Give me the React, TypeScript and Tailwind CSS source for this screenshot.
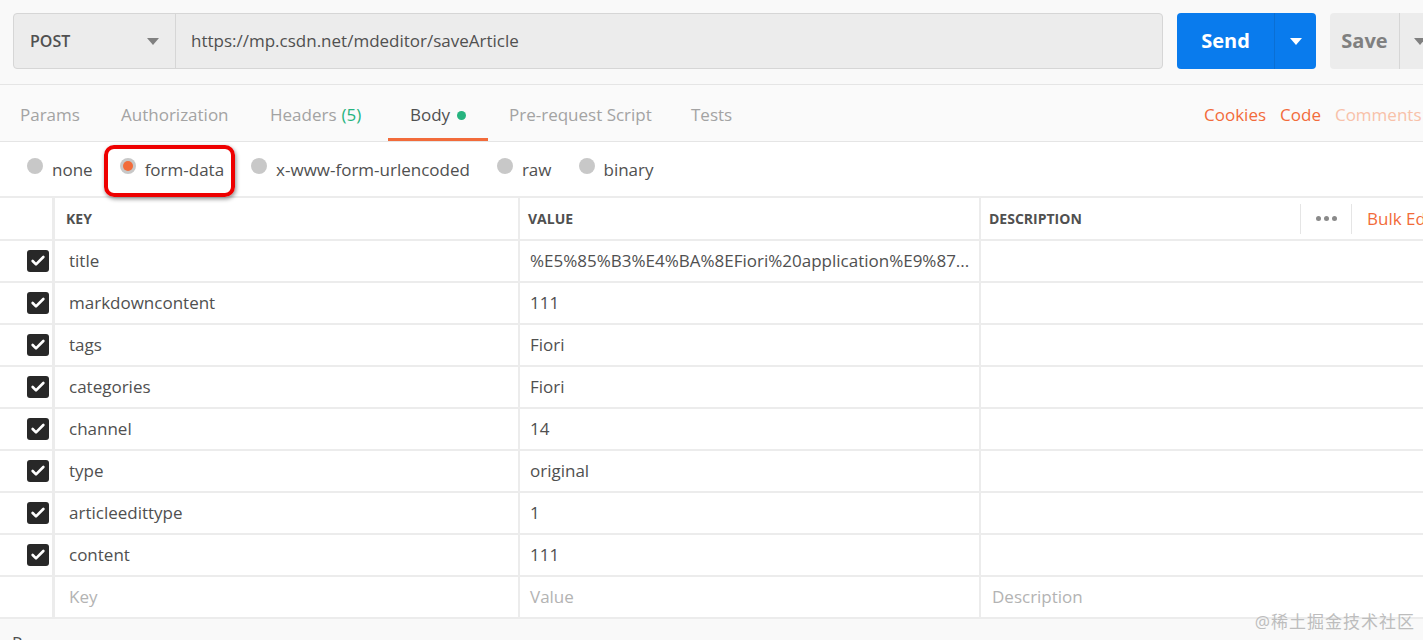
import { Check } from "lucide-react";

const rows = [
  { key: "title", value: "%E5%85%B3%E4%BA%8EFiori%20application%E9%87..." },
  { key: "markdowncontent", value: "111" },
  { key: "tags", value: "Fiori" },
  { key: "categories", value: "Fiori" },
  { key: "channel", value: "14" },
  { key: "type", value: "original" },
  { key: "articleedittype", value: "1" },
  { key: "content", value: "111" },
];

const tabs = [
  { label: "Params", cls: "w-[100px] pl-[20px]" },
  { label: "Authorization", cls: "w-[149px] pl-[21px]" },
  { label: "Headers", count: "(5)", cls: "w-[139px] pl-[21px]" },
  { label: "Body", active: true, cls: "w-[100px] pl-[22px]" },
  { label: "Pre-request Script", cls: "w-[182px] pl-[21px]" },
  { label: "Tests", cls: "w-[80px] pl-[21px]" },
];

const bodyTypes = ["none", "form-data", "x-www-form-urlencoded", "raw", "binary"];

function Caret({ className }: { className?: string }) {
  return (
    <svg width="12" height="7" viewBox="0 0 12 7" className={className}>
      <path d="M0 0 L12 0 L6 7 Z" fill="currentColor" />
    </svg>
  );
}

export default function App() {
  return (
    <div
      className="relative h-[640px] w-[1423px] overflow-hidden bg-[#f9f9f9] text-[#505050]"
      style={{ fontFamily: "'Open Sans', 'Noto Sans CJK SC', sans-serif" }}
    >
      {/* request bar */}
      <div className="flex h-[84px] items-start gap-[14px] overflow-hidden pl-[13px] pt-[13px]">
        <div className="flex h-[56px] w-[1150px] shrink-0 rounded-[4px] border border-[#d6d6d6] bg-[#ececec]">
          <div className="flex w-[162px] items-center justify-between border-r border-[#d6d6d6] pl-[16px] pr-[16px]">
            <span className="text-[16px] font-semibold">POST</span>
            <Caret className="text-[#808080]" />
          </div>
          <div className="flex items-center pl-[15px] text-[17px]">https://mp.csdn.net/mdeditor/saveArticle</div>
        </div>
        <div className="flex h-[56px] w-[139px] shrink-0 overflow-hidden rounded-[4px] bg-[#097bed] text-white">
          <div className="flex w-[97px] items-center justify-center text-[20px] font-bold">Send</div>
          <div className="flex flex-1 items-center justify-center border-l border-[#0a6fd4]">
            <Caret />
          </div>
        </div>
        <div className="flex h-[56px] w-[120px] shrink-0 overflow-hidden rounded-[4px] bg-[#ececec] text-[#808080]">
          <div className="flex w-[69px] items-center justify-center text-[20px] font-bold">Save</div>
          <div className="flex w-[40px] items-center justify-center border-l border-[#d6d6d6]">
            <Caret />
          </div>
        </div>
      </div>

      {/* tabs */}
      <div className="flex h-[58px] items-stretch overflow-hidden border-y border-[#e5e5e5] bg-[#fafafa]">
        <div className="flex flex-1 items-stretch">
          {tabs.map((t) => (
            <div
              key={t.label}
              className={
                "flex shrink-0 items-center whitespace-nowrap border-b-[3px] pt-[7px] text-[17px] " +
                t.cls +
                " " +
                (t.active ? "border-[#f26b3a] text-[#505050]" : "border-transparent text-[#a3a3a3]")
              }
            >
              {t.label}
              {t.count && <span className="ml-[5px] text-[#26b47f]">{t.count}</span>}
              {t.active && <span className="ml-[7px] h-[9px] w-[9px] rounded-full bg-[#26b47f]" />}
            </div>
          ))}
        </div>
        <div className="flex w-[219px] shrink-0 items-center gap-[14px] whitespace-nowrap pt-[4px] text-[17px]">
          <span className="text-[#f26b3a]">Cookies</span>
          <span className="text-[#f26b3a]">Code</span>
          <span className="text-[#f8c1a9]">Comments (0)</span>
        </div>
      </div>

      {/* body types */}
      <div className="flex h-[54px] items-center gap-[27px] bg-white pl-[27px] pb-[1px]">
        {bodyTypes.map((b) => (
          <div key={b} className="flex items-center gap-[9px] text-[17px]">
            <span className="mb-[5px] flex h-[16px] w-[16px] items-center justify-center rounded-full bg-[#c8c8c8]">
              {b === "form-data" && <span className="h-[10px] w-[10px] rounded-full bg-[#f26b3a]" />}
            </span>
            <span className="pt-[2px]">{b}</span>
          </div>
        ))}
      </div>

      {/* table */}
      <div className="bg-white">
        <div className="grid grid-cols-[55px_465px_461px_1fr] border-t-2 border-[#ececec]">
          <div className="h-[43px] border-r-[3px] border-b-2 border-[#ececec]" />
          <div className="flex h-[43px] items-center border-r-2 border-b-2 border-[#ececec] pl-[11px] text-[14px] font-bold">KEY</div>
          <div className="flex h-[43px] items-center border-r-2 border-b-2 border-[#ececec] pl-[8px] text-[14px] font-bold">VALUE</div>
          <div className="flex h-[43px] items-center overflow-hidden whitespace-nowrap border-b-2 border-[#ececec] pl-[8px] text-[14px] font-bold">
            <span className="w-[311px] shrink-0">DESCRIPTION</span>
            <div className="flex h-[30px] w-[52px] shrink-0 items-center justify-center border-x border-[#e5e5e5]">
              <span className="flex gap-[3px]">
                <span className="h-[5px] w-[5px] rounded-full bg-[#8a8a8a]" />
                <span className="h-[5px] w-[5px] rounded-full bg-[#8a8a8a]" />
                <span className="h-[5px] w-[5px] rounded-full bg-[#8a8a8a]" />
              </span>
            </div>
            <span className="ml-[15px] shrink-0 text-[17px] font-normal text-[#f26b3a]">Bulk Edit</span>
          </div>

          {rows.map((r) => (
            <div key={r.key} className="contents">
              <div className="flex h-[42px] items-center border-r-[3px] border-b-2 border-[#ececec] pl-[27px]">
                <span className="flex h-[22px] w-[22px] items-center justify-center rounded-[3px] bg-[#282828]">
                  <Check className="h-[16px] w-[16px] text-white" strokeWidth={4} />
                </span>
              </div>
              <div className="flex h-[42px] items-center border-r-2 border-b-2 border-[#ececec] pl-[14px] text-[17px]">{r.key}</div>
              <div className="flex h-[42px] items-center border-r-2 border-b-2 border-[#ececec] pl-[10px] text-[17px]">{r.value}</div>
              <div className="h-[42px] border-b-2 border-[#ececec]" />
            </div>
          ))}

          <div className="h-[42px] border-r-[3px] border-b-2 border-[#ececec]" />
          <div className="flex h-[42px] items-center border-r-2 border-b-2 border-[#ececec] pl-[14px] text-[17px] text-[#b3b3b3]">Key</div>
          <div className="flex h-[42px] items-center border-r-2 border-b-2 border-[#ececec] pl-[10px] text-[17px] text-[#b3b3b3]">Value</div>
          <div className="flex h-[42px] items-center border-b-2 border-[#ececec] pl-[11px] text-[17px] text-[#b3b3b3]">Description</div>
        </div>
      </div>

      {/* response */}
      <div className="pl-[12px] pt-[11px] text-[17px] text-[#505050]">Response</div>

      {/* annotation */}
      <div className="absolute left-[104px] top-[145px] h-[52px] w-[131px] rounded-[10px] border-[4px] border-[#ee0000] shadow-[1px_2px_4px_rgba(0,0,0,0.45)]" />

      {/* watermark */}
      <div className="absolute bottom-[6px] right-[8px] text-[17px] tracking-[1px] text-[#bdbdbd]">@稀土掘金技术社区</div>
    </div>
  );
}
